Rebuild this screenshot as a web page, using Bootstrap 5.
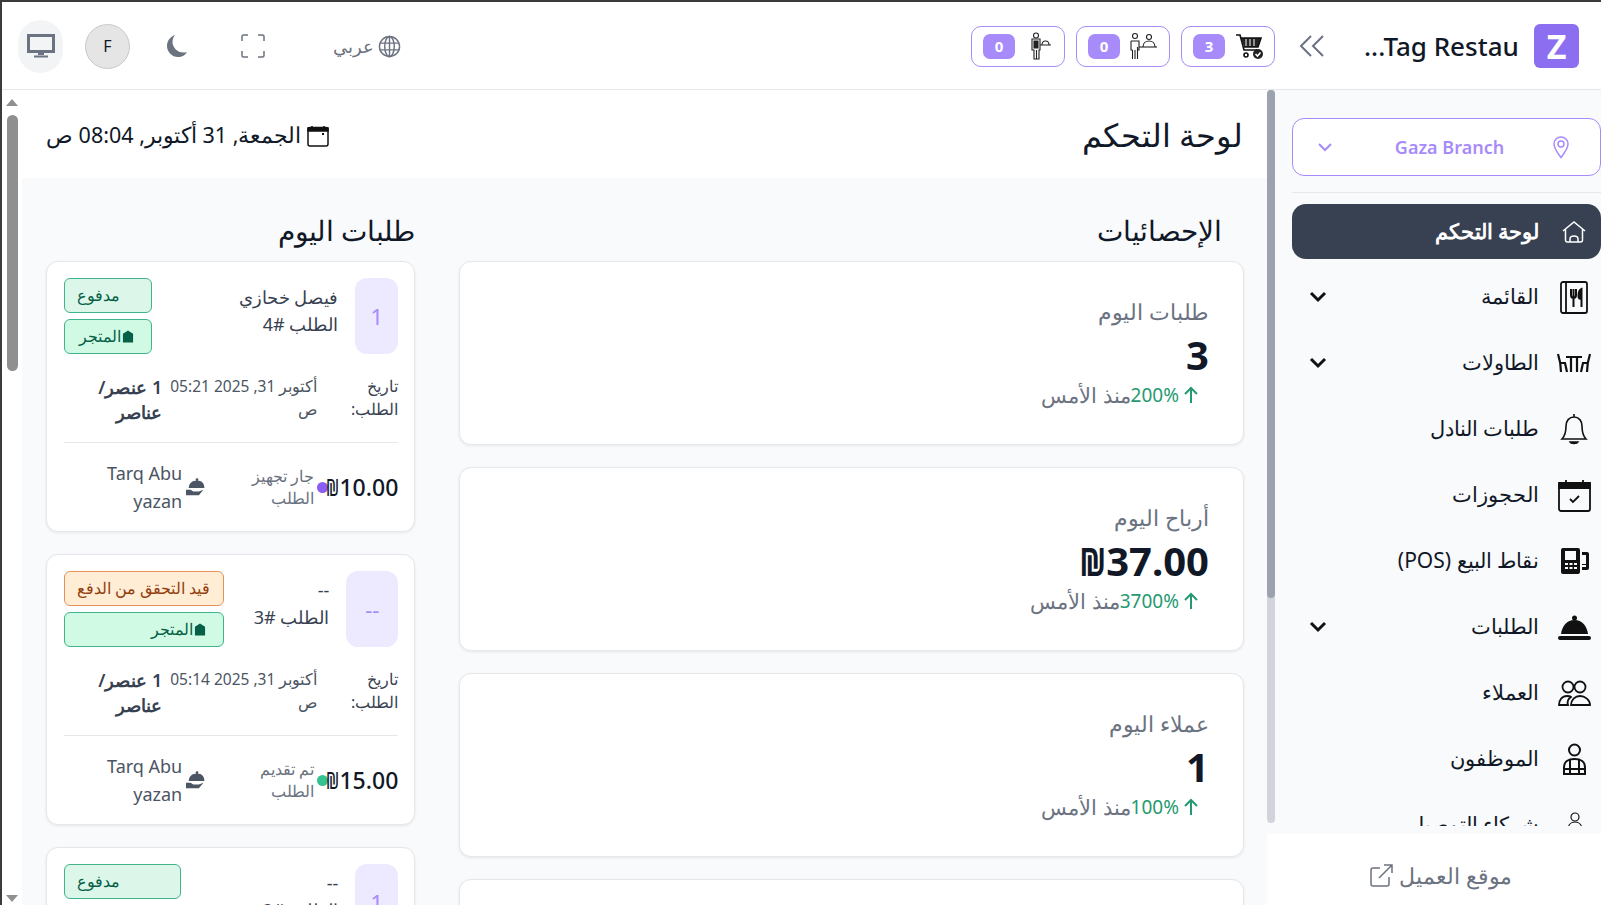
<!DOCTYPE html>
<html lang="ar" dir="rtl">
<head>
  <title>لوحة التحكم</title>
  <meta charset="UTF-8">
  <meta name="viewport" content="width=device-width, initial-scale=1.0">
  <link href="https://cdn.jsdelivr.net/npm/bootstrap@5.3.0/dist/css/bootstrap.min.css" rel="stylesheet">
  <style>
    html, body { height: 100%; overflow: hidden; }
    body { font-family: "Noto Sans", "Open Sans", sans-serif; color: #111827; background: #fff; }
    .app-shell { height: 100vh; border-top: 2px solid #3b3b3b; border-left: 2px solid #3b3b3b; }
    .top-bar { height: 88px; flex: none; border-bottom: 1px solid #e5e7eb; padding: 1px 22px 0 16px; }
    .brand-box { width: 45px; height: 44px; border-radius: 6px; background: #8b6ff0; color: #fff; font-size: 34px; font-weight: 700; line-height: 44px; text-align: center; }
    .brand-name { font-size: 26px; font-weight: 500; width: 151px; margin-right: 19px; white-space: nowrap; direction: ltr; text-align: right; }
    .collapse-btn { margin: 0 38px 0 23px; color: #6b7280; }
    .count-row { gap: 11px; }
    .count-pill { width: 94px; height: 41px; border: 1px solid #a78bfa; border-radius: 10px; background: #fff; padding: 0 11px 0 11px; }
    .count-num { width: 32px; height: 25px; border-radius: 7px; background: #a78bfa; color: #fff; font-size: 15px; font-weight: 700; line-height: 25px; text-align: center; }
    .tool-lang { font-size: 18px; color: #6b7280; gap: 4px; margin-left: 68px; }
    .tool-icon { color: #6b7280; margin-left: 53px; }
    .tool-icon.is-moon { margin-left: 36px; }
    .user-dot { width: 45px; height: 45px; border-radius: 50%; background: #e5e5e5; border: 1px solid #c9c9c9; font-size: 16px; line-height: 43px; text-align: center; margin-left: 22px; }
    .screen-btn { width: 45px; height: 53px; border-radius: 23px; background: #f3f4f6; color: #6b7280; }

    .side-pane { width: 334px; flex: none; background: #fff; }
    .side-wrap { height: 744px; flex: none; background: #f9fafb; }
    .side-scroll { height: 736px; overflow: hidden; padding: 28px 0 0 17px; min-width: 0; }
    .side-bar { width: 8px; height: 733px; flex: none; background: #d1d5db; border-radius: 4px; }
    .side-thumb { height: 508px; background: #9ca3af; border-radius: 4px; }
    .branch-box { height: 58px; border: 1px solid #a78bfa; border-radius: 12px; background: #fff; color: #a78bfa; font-size: 18px; font-weight: 600; padding: 0 30px 0 24px; }
    .branch-name { margin-left: 14px; }
    .side-rule { border-top: 1px solid #e5e7eb; margin: 16px 0 11px; }
    .side-item { height: 66px; font-size: 21px; color: #111827; padding: 0 9px 0 17px; gap: 17px; text-decoration: none; }
    .side-item.is-active { height: 55px; margin-bottom: 5px; background: #374151; color: #fff; font-weight: 600; border-radius: 14px; }
    .side-ic { width: 36px; display: flex; justify-content: center; flex: none; }
    .side-foot { height: 69px; font-size: 22px; color: #6b7280; gap: 6px; padding: 12px 0 0 14px; }

    .main-pane { min-width: 0; background: #fff; }
    .main-flow { min-width: 0; overflow: hidden; }
    .main-bar { width: 20px; flex: none; background: #fff; padding: 9px 0 3px; }
    .bar-up { border: solid transparent; border-width: 0 6.500px 7px; border-bottom-color: #8f8f8f; }
    .bar-down { border: solid transparent; border-width: 7px 6.500px 0; border-top-color: #8f8f8f; margin-top: auto; }
    .bar-thumb { width: 11px; height: 256px; margin-top: 9px; border-radius: 6px; background: #8f8f8f; }
    .page-head { height: 88px; padding: 3px 24px 0 24px; }
    .page-title { font-size: 32px; font-weight: 500; margin: 0; }
    .page-date { font-size: 21.500px; gap: 6px; }
    .page-body { background: #f9fafb; padding: 37px 23px 0 24px; height: 800px; display: grid; grid-template-columns: 784fr 369fr; gap: 44px; align-items: start; }
    .col-title { font-size: 27.500px; font-weight: 500; line-height: 32px; margin: 0 0 14px; }
    .col-title.is-inset { padding-right: 22px; }
    .soft-card { border: 1px solid #e5e7eb; border-radius: 12px; box-shadow: 0 1px 3px rgba(0,0,0,.08); background: #fff; }
    .stat-card { height: 184px; margin-bottom: 22px; padding: 34px 34px 0; }
    .stat-label { font-size: 22px; line-height: 30px; color: #6b7280; }
    .stat-value { font-size: 40px; font-weight: 700; line-height: 52px; margin-top: 3px; }
    .shekel-big { display: inline-block; width: 22px; transform: scaleX(.72); transform-origin: right center; }
    .stat-delta { font-size: 21px; line-height: 28px; color: #6b7280; padding-right: 10px; }
    .stat-up { font-size: 19px; color: #259a70; }
    .order-card { height: 271px; margin-bottom: 22px; padding: 16px 16px 0 17px; }
    .order-num { width: 43px; height: 76px; border-radius: 12px; background: #ede9fe; color: #a78bfa; font-size: 22px; flex: none; }
    .order-num.is-wide { width: 52px; }
    .order-who { font-size: 18px; line-height: 27px; color: #374151; margin-right: 17px; padding-top: 6px; }
    .order-tags { margin-right: auto; gap: 6px; width: 88px; flex: none; }
    .order-tags.is-mid { width: 117px; }
    .order-tags.is-wide { width: 160px; }
    .state-tag { height: 35px; border-radius: 6px; border: 1px solid #3fb48d; background: #dcf6ea; color: #065f46; font-size: 16px; font-weight: 500; padding: 0 12px; line-height: 33px; text-align: left; white-space: nowrap; }
    .state-tag.is-store { background: #d1fae5; gap: 1px; display: flex; align-items: center; padding: 0 17px 0 0; }
    .state-tag.is-wait { background: #ffedd5; border-color: #e8905c; color: #92400e; }
    .order-meta { margin-top: 21px; font-size: 16px; line-height: 23px; color: #374151; }
    .meta-key { width: 62px; flex: none; }
    .meta-date { width: 150px; flex: none; font-size: 15.500px; color: #4b5563; margin-right: 19px; }
    .meta-items { font-size: 18px; font-weight: 600; margin-right: 5px; line-height: 25px; }
    .order-rule { border-top: 1px solid #e5e7eb; margin: 17px 0 16px; }
    .order-price { font-size: 23px; font-weight: 500; white-space: nowrap; }
    .shekel-small { display: inline-block; width: 11px; transform: scaleX(.68); transform-origin: right center; }
    .state-dot { width: 11px; height: 11px; border-radius: 50%; flex: none; margin: 0 0 0 3px; background: #8b5cf6; }
    .state-dot.is-done { background: #34c38f; }
    .order-state { width: 72px; font-size: 16px; line-height: 22px; color: #6b7280; flex: none; margin-left: 36px; }
    .order-staff { font-size: 18px; line-height: 28px; color: #4b5563; gap: 4px; }
  </style>
</head>
<body>
  <div class="app-shell d-flex flex-column">

    <header class="top-bar d-flex align-items-center">
      <div class="brand-box">Z</div>
      <div class="brand-name">...Tag Restau</div>
      <svg class="collapse-btn" width="28" height="26" viewBox="0 0 28 26" fill="none" stroke="currentColor" stroke-width="2"><path d="M13 3 3 13l10 10M25 3 15 13l10 10"/></svg>

      <div class="count-row d-flex">
        <div class="count-pill d-flex align-items-center justify-content-between">
          <svg width="28" height="28" viewBox="0 0 28 28" fill="none" stroke="#111" stroke-width="1.6"><path d="M1 3h4l4 15h13"/><path d="M6 6h20l-3 9H9" fill="#222"/><path d="M11 7v7M15 7v7M19 7v7" stroke="#fff" stroke-width="1"/><circle cx="11" cy="23" r="2"/><circle cx="23" cy="22" r="5" fill="#222" stroke="none"/><path d="m20.500 22 2 2 3-3.500" stroke="#fff"/></svg>
          <span class="count-num">3</span>
        </div>
        <div class="count-pill d-flex align-items-center justify-content-between">
          <svg width="30" height="28" viewBox="0 0 30 28" fill="none" stroke="#222" stroke-width="1.100"><circle cx="7" cy="4" r="2.500"/><path d="M3 9h8v9H9.500v9M4.500 18v9M3 9v9h1.500M9.500 18v-3M7 18v9"/><path d="M11 15h18"/><circle cx="21" cy="5" r="2.500"/><path d="M15 15c0-4 3-6 6-6s6 2 6 6"/></svg>
          <span class="count-num">0</span>
        </div>
        <div class="count-pill d-flex align-items-center justify-content-between">
          <svg width="28" height="28" viewBox="0 0 28 28" fill="none" stroke="#222" stroke-width="1.100"><circle cx="11" cy="3.500" r="2.500"/><path d="M7 7h8v11h-1v9h-5v-9H7z"/><path d="M11.500 18v9"/><path d="M9 9h4v7H9z" fill="#222"/><path d="M15 13h11M17 13c0-3 2-4 3.500-4s3.500 1 3.500 4"/></svg>
          <span class="count-num">0</span>
        </div>
      </div>

      <div class="d-flex align-items-center me-auto">
        <div class="tool-lang d-flex align-items-center">
          <svg width="23" height="23" viewBox="0 0 24 24" fill="none" stroke="currentColor" stroke-width="1.500"><circle cx="12" cy="12" r="10.500"/><ellipse cx="12" cy="12" rx="5" ry="10.500"/><path d="M12 1.500v21M2 8.500h20M2 15.500h20"/></svg>
          <span>عربي</span>
        </div>
        <svg class="tool-icon" width="24" height="24" viewBox="0 0 24 24" fill="none" stroke="currentColor" stroke-width="1.500"><path d="M1 7V2.500C1 1.700 1.700 1 2.500 1H7M17 1h4.500c.8 0 1.500.7 1.500 1.500V7M23 17v4.500c0 .8-.7 1.500-1.500 1.500H17M7 23H2.500C1.700 23 1 22.300 1 21.500V17"/></svg>
        <svg class="tool-icon is-moon" width="22" height="24" viewBox="0 0 22 24" fill="currentColor"><path d="M9 1C3.500 3 1 7.500 1 12c0 6 5 11 11 11 4 0 7.500-2 9-5-1 .4-2.500.6-3.500.6C11 18.600 6.500 13 6.500 8c0-2.500 1-5 2.500-7z"/></svg>
        <div class="user-dot">F</div>
        <div class="screen-btn d-flex align-items-center justify-content-center">
          <svg width="28" height="24" viewBox="0 0 28 24" fill="none" stroke="currentColor"><rect x="1.500" y="1.500" width="25" height="16" stroke-width="3"/><path d="M11 20h6M7 22.500h14" stroke-width="2"/></svg>
        </div>
      </div>
    </header>

    <div class="d-flex flex-grow-1" style="min-height:0">
      <aside class="side-pane d-flex flex-column">
        <div class="side-wrap d-flex">
          <div class="side-scroll flex-grow-1">
            <div class="branch-box d-flex align-items-center justify-content-between">
              <svg width="18" height="24" viewBox="0 0 18 24" fill="none" stroke="currentColor" stroke-width="1.500"><path d="M9 22.500C5 17 2 13.500 2 9a7 7 0 0 1 14 0c0 4.500-3 8-7 13.500z"/><circle cx="9" cy="9" r="3"/></svg>
              <span class="branch-name">Gaza Branch</span>
              <svg width="16" height="10" viewBox="0 0 16 10" fill="none" stroke="currentColor" stroke-width="2"><path d="m2 2 6 6 6-6"/></svg>
            </div>
            <div class="side-rule"></div>

            <a class="side-item is-active d-flex align-items-center" href="#">
              <span class="side-ic"><svg width="26" height="24" viewBox="0 0 26 24" fill="none" stroke="#fff" stroke-width="1.500"><path d="M2 11 13 2l11 9M4.500 9.500V20c0 1 1 2 2 2h13c1 0 2-1 2-2V9.500"/><path d="M9 22v-3c0-2 2-3 4-3s4 1 4 3v3"/></svg></span>
              <span>لوحة التحكم</span>
            </a>
            <a class="side-item d-flex align-items-center" href="#">
              <span class="side-ic"><svg width="28" height="33" viewBox="0 0 28 33" fill="none" stroke="#111" stroke-width="1.800"><rect x="1" y="1" width="26" height="31" rx="2"/><path d="M6 1v31"/><path d="M11 8v6c0 2 1 3 2.500 3s2.500-1 2.500-3V8M13.500 8v18" stroke-width="2"/><path d="M21.500 26V8c-2 1-3 4-3 7 0 2 1 3 3 3" fill="#111" stroke-width="2"/></svg></span>
              <span>القائمة</span>
              <svg class="me-auto" width="18" height="12" viewBox="0 0 18 12" fill="none" stroke="#111" stroke-width="3"><path d="m2 2 7 7 7-7"/></svg>
            </a>
            <a class="side-item d-flex align-items-center" href="#">
              <span class="side-ic"><svg width="34" height="20" viewBox="0 0 34 20" fill="none" stroke="#111" stroke-width="2.200"><path d="M1 1c2 6 3 12 3 18M2.500 10H8l2 9M33 1c-2 6-3 12-3 18M31.500 10H26l-2 9M9 4h16M14 4v15M20 4v15"/></svg></span>
              <span>الطاولات</span>
              <svg class="me-auto" width="18" height="12" viewBox="0 0 18 12" fill="none" stroke="#111" stroke-width="3"><path d="m2 2 7 7 7-7"/></svg>
            </a>
            <a class="side-item d-flex align-items-center" href="#">
              <span class="side-ic"><svg width="28" height="32" viewBox="0 0 28 32" fill="none" stroke="#111" stroke-width="1.600"><path d="M14 1v3M14 4c-5 0-8 4-8 9 0 6-1 10-4 13h24c-3-3-4-7-4-13 0-5-3-9-8-9z"/><path d="M10 29c1 2 7 2 8 0z" fill="#111"/></svg></span>
              <span>طلبات النادل</span>
            </a>
            <a class="side-item d-flex align-items-center" href="#">
              <span class="side-ic"><svg width="33" height="33" viewBox="0 0 33 33" fill="none" stroke="#111" stroke-width="1.800"><rect x="1" y="4" width="31" height="28" rx="2"/><path d="M1 4h31v5H1z" fill="#111"/><path d="M8 1v4M25 1v4"/><path d="m12 20 3 3 6-6"/></svg></span>
              <span>الحجوزات</span>
            </a>
            <a class="side-item d-flex align-items-center" href="#">
              <span class="side-ic"><svg width="29" height="28" viewBox="0 0 29 28" fill="#111"><path fill-rule="evenodd" d="M3 1h15a2 2 0 0 1 2 2v22a2 2 0 0 1-2 2H3a2 2 0 0 1-2-2V3a2 2 0 0 1 2-2zm2 3v9h11V4zm0 12v2h3v-2zm4.500 0v2h3v-2zm4.500 0v2h3v-2zM5 20v2h3v-2zm4.500 0v2h3v-2zm4.500 0v2h3v-2z"/><path d="M22 5h5a2 2 0 0 1 2 2v14a2 2 0 0 1-2 2h-5v-3h4v-2h-4v-1h4V8h-4z"/></svg></span>
              <span>نقاط البيع (POS)</span>
            </a>
            <a class="side-item d-flex align-items-center" href="#">
              <span class="side-ic"><svg width="33" height="25" viewBox="0 0 33 25" fill="#111"><circle cx="16.500" cy="3" r="2.500"/><path d="M3 19C4 11 9 5 16.500 5S29 11 30 19z"/><rect y="21" width="33" height="4" rx="2"/></svg></span>
              <span>الطلبات</span>
              <svg class="me-auto" width="18" height="12" viewBox="0 0 18 12" fill="none" stroke="#111" stroke-width="3"><path d="m2 2 7 7 7-7"/></svg>
            </a>
            <a class="side-item d-flex align-items-center" href="#">
              <span class="side-ic"><svg width="33" height="26" viewBox="0 0 33 26" fill="none" stroke="#111" stroke-width="1.800"><circle cx="10" cy="7" r="5.500"/><circle cx="22" cy="7" r="5.500"/><path d="M1 25c0-5 3-9 8-9 1 0 3 0 4 1-3 2-4 5-3 8zM13 25c0-5 4-9 9-9s10 4 10 9z"/></svg></span>
              <span>العملاء</span>
            </a>
            <a class="side-item d-flex align-items-center" href="#">
              <span class="side-ic"><svg width="25" height="32" viewBox="0 0 25 32" fill="none" stroke="#111" stroke-width="2"><circle cx="12.500" cy="7" r="5.500"/><path d="M2 31v-7c0-5 4-8 10.500-8S23 19 23 24v7z"/><path d="M8 17v14M17 17v14M2 26h21"/></svg></span>
              <span>الموظفون</span>
            </a>
            <a class="side-item d-flex align-items-center" href="#">
              <span class="side-ic"><svg width="30" height="26" viewBox="0 0 30 26" fill="none" stroke="#111" stroke-width="1.200"><circle cx="16" cy="5" r="4"/><path d="M9 18c0-5 3-8 7-8s7 3 7 8zM1 16h7M24 16h5"/></svg></span>
              <span>شركاء التوصيل</span>
            </a>
          </div>
          <div class="side-bar"><div class="side-thumb"></div></div>
        </div>
        <div class="side-foot d-flex align-items-center justify-content-center flex-grow-1">
          <span>موقع العميل</span>
          <svg width="23" height="23" viewBox="0 0 23 23" fill="none" stroke="currentColor" stroke-width="1.500"><path d="M10 4H3a2 2 0 0 0-2 2v14a2 2 0 0 0 2 2h14a2 2 0 0 0 2-2v-7M9 14 22 1M14 1h8v8"/></svg>
        </div>
      </aside>

      <main class="main-pane d-flex flex-grow-1">
        <div class="main-flow flex-grow-1">
          <div class="page-head d-flex align-items-center justify-content-between">
            <h1 class="page-title">لوحة التحكم</h1>
            <div class="page-date d-flex align-items-center">
              <svg width="22" height="22" viewBox="0 0 22 22" fill="none" stroke="#111" stroke-width="1.500"><rect x="1" y="2.500" width="20" height="18.500" rx="2"/><path d="M1 3h20v3H1z" fill="#111"/><path d="M5 1v2M17 1v2"/><rect x="15" y="8" width="2" height="2" fill="#111" stroke="none"/></svg>
              <span>الجمعة, 31 أكتوبر, 08:04 ص</span>
            </div>
          </div>

          <div class="page-body">
            <section>
              <h2 class="col-title is-inset">الإحصائيات</h2>
              <div class="soft-card stat-card">
                <div class="stat-label">طلبات اليوم</div>
                <div class="stat-value">3</div>
                <div class="stat-delta d-flex align-items-center"><svg width="16" height="18" viewBox="0 0 16 18" fill="none" stroke="#259a70" stroke-width="2"><path d="M8 17V2M2 8l6-6 6 6"/></svg><span class="stat-up me-1">200%</span><span>منذ الأمس</span></div>
              </div>
              <div class="soft-card stat-card">
                <div class="stat-label">أرباح اليوم</div>
                <div class="stat-value">37.00<span class="shekel-big">₪</span></div>
                <div class="stat-delta d-flex align-items-center"><svg width="16" height="18" viewBox="0 0 16 18" fill="none" stroke="#259a70" stroke-width="2"><path d="M8 17V2M2 8l6-6 6 6"/></svg><span class="stat-up me-1">3700%</span><span>منذ الأمس</span></div>
              </div>
              <div class="soft-card stat-card">
                <div class="stat-label">عملاء اليوم</div>
                <div class="stat-value">1</div>
                <div class="stat-delta d-flex align-items-center"><svg width="16" height="18" viewBox="0 0 16 18" fill="none" stroke="#259a70" stroke-width="2"><path d="M8 17V2M2 8l6-6 6 6"/></svg><span class="stat-up me-1">100%</span><span>منذ الأمس</span></div>
              </div>
              <div class="soft-card stat-card"></div>
            </section>

            <section>
              <h2 class="col-title">طلبات اليوم</h2>

              <div class="soft-card order-card">
                <div class="d-flex">
                  <div class="order-num d-flex align-items-center justify-content-center">1</div>
                  <div class="order-who">
                    <div>فيصل خحازي</div>
                    <div>الطلب #4</div>
                  </div>
                  <div class="order-tags d-flex flex-column">
                    <div class="state-tag">مدفوع</div>
                    <div class="state-tag is-store"><svg width="12" height="13" viewBox="0 0 13 13" fill="#065f46"><path d="M6.500 0 12 3.500V13H1V3.500z"/></svg><span>المتجر</span></div>
                  </div>
                </div>
                <div class="order-meta d-flex">
                  <div class="meta-key">تاريخ الطلب:</div>
                  <div class="meta-date">أكتوبر 31, 2025 05:21 ص</div>
                  <div class="meta-items">1 عنصر/ عناصر</div>
                </div>
                <div class="order-rule"></div>
                <div class="d-flex align-items-center">
                  <div class="order-price">10.00<span class="shekel-small">₪</span></div>
                  <span class="state-dot"></span>
                  <div class="order-state">جار تجهيز الطلب</div>
                  <div class="order-staff d-flex align-items-center">
                    <svg width="22" height="20" viewBox="0 0 22 20" fill="#4b5563"><circle cx="12" cy="2" r="1.500"/><path d="M3 11c0-5 4-8 9-8s8 3 8 8z"/><path d="M0 13h5l3 2h6l5-2-5 6H0z"/></svg>
                    <span>Tarq Abu yazan</span>
                  </div>
                </div>
              </div>

              <div class="soft-card order-card">
                <div class="d-flex">
                  <div class="order-num is-wide d-flex align-items-center justify-content-center">--</div>
                  <div class="order-who">
                    <div>--</div>
                    <div>الطلب #3</div>
                  </div>
                  <div class="order-tags is-wide d-flex flex-column">
                    <div class="state-tag is-wait">قيد التحقق من الدفع</div>
                    <div class="state-tag is-store"><svg width="12" height="13" viewBox="0 0 13 13" fill="#065f46"><path d="M6.500 0 12 3.500V13H1V3.500z"/></svg><span>المتجر</span></div>
                  </div>
                </div>
                <div class="order-meta d-flex">
                  <div class="meta-key">تاريخ الطلب:</div>
                  <div class="meta-date">أكتوبر 31, 2025 05:14 ص</div>
                  <div class="meta-items">1 عنصر/ عناصر</div>
                </div>
                <div class="order-rule"></div>
                <div class="d-flex align-items-center">
                  <div class="order-price">15.00<span class="shekel-small">₪</span></div>
                  <span class="state-dot is-done"></span>
                  <div class="order-state">تم تقديم الطلب</div>
                  <div class="order-staff d-flex align-items-center">
                    <svg width="22" height="20" viewBox="0 0 22 20" fill="#4b5563"><circle cx="12" cy="2" r="1.500"/><path d="M3 11c0-5 4-8 9-8s8 3 8 8z"/><path d="M0 13h5l3 2h6l5-2-5 6H0z"/></svg>
                    <span>Tarq Abu yazan</span>
                  </div>
                </div>
              </div>

              <div class="soft-card order-card">
                <div class="d-flex">
                  <div class="order-num d-flex align-items-center justify-content-center">1</div>
                  <div class="order-who">
                    <div>--</div>
                    <div>الطلب #2</div>
                  </div>
                  <div class="order-tags is-mid d-flex flex-column">
                    <div class="state-tag">مدفوع</div>
                  </div>
                </div>
              </div>
            </section>
          </div>
        </div>
        <div class="main-bar d-flex flex-column align-items-center">
          <span class="bar-up"></span>
          <span class="bar-thumb"></span>
          <span class="bar-down"></span>
        </div>
      </main>
    </div>
  </div>
  <script src="https://cdn.jsdelivr.net/npm/bootstrap@5.3.0/dist/js/bootstrap.bundle.min.js"></script>
</body>
</html>
